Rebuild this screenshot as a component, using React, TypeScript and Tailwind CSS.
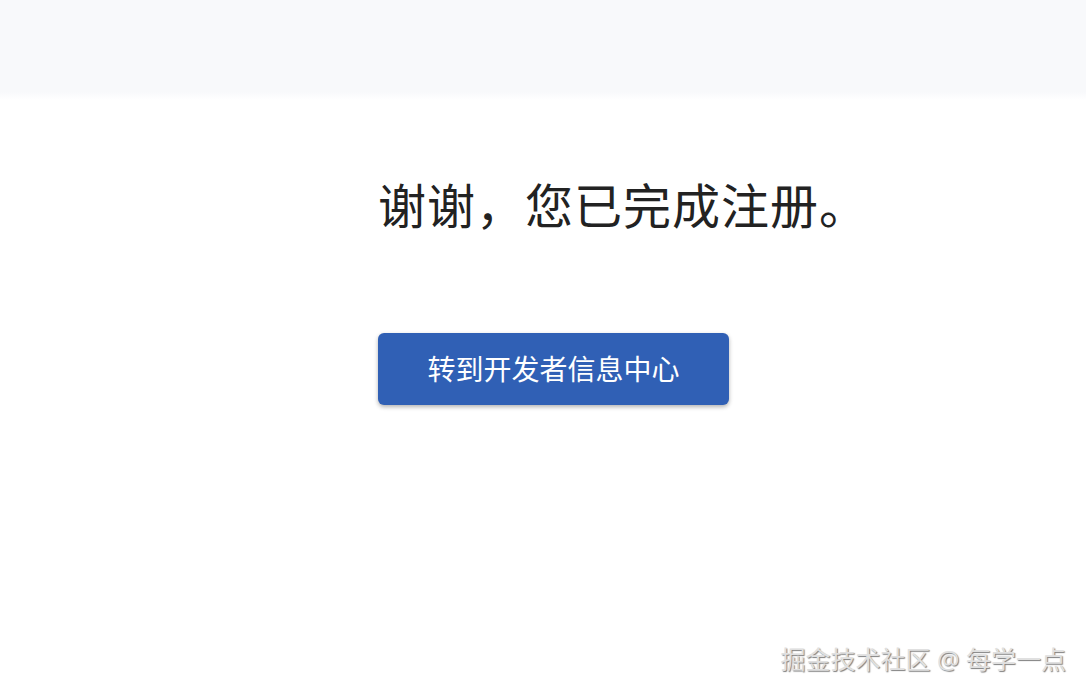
export default function App() {
  return (
    <div
      className="relative w-[1086px] h-[694px] bg-white overflow-hidden"
      style={{ fontFamily: '"Noto Sans", "Noto Sans CJK SC", sans-serif' }}
    >
      {/* Top band */}
      <div className="h-[92px] bg-[#f8f9fb]" />
      <div className="h-[8px] bg-gradient-to-b from-[#f8f9fb] to-white" />

      {/* Content */}
      <div className="flex flex-col items-start pl-[378px] pt-[76px]">
        <h1 className="text-[48px] leading-[60px] tracking-[1px] font-normal text-[#222]">
          谢谢，您已完成注册。
        </h1>
        <button className="mt-[97px] w-[351px] h-[72px] rounded-[6px] bg-[#3060b5] text-white text-[28px] shadow-[0_2px_4px_rgba(0,0,0,0.3)]">
          转到开发者信息中心
        </button>
      </div>

      {/* Watermark */}
      <div className="absolute right-[20px] bottom-[19px] text-[25px] leading-[32px] text-[#e0e0e0] [text-shadow:1px_1px_1px_rgba(0,0,0,0.5),-1px_-1px_0_rgba(255,255,255,0.9)]">
        掘金技术社区 @ 每学一点
      </div>
    </div>
  );
}
